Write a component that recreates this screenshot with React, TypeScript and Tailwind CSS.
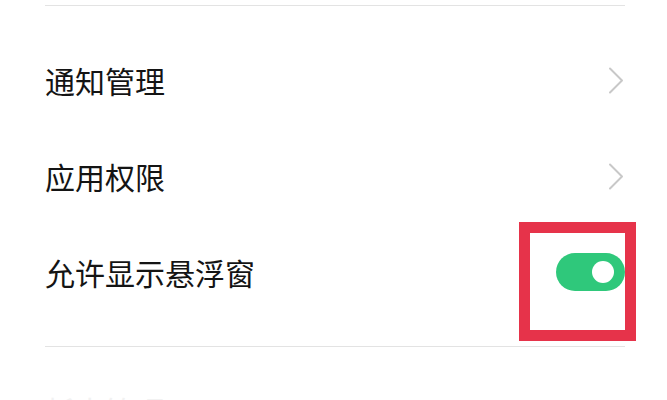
import React from "react";

const Chevron = () => (
  <svg width="16" height="27" viewBox="0 0 16 27" fill="none">
    <path d="M2 1.5 L14 13.5 L2 25.5" stroke="#c8c8c8" strokeWidth="2" strokeLinecap="round" strokeLinejoin="round" />
  </svg>
);

const Row = ({ label, right }: { label: string; right: React.ReactNode }) => (
  <div className="flex h-[96px] items-center justify-between">
    <span className="text-[30px] leading-none text-[#141414]" style={{ fontFamily: '"Noto Sans CJK SC", "Noto Sans", sans-serif' }}>
      {label}
    </span>
    <div className="flex items-center">{right}</div>
  </div>
);

export default function App() {
  return (
    <div className="relative h-[400px] w-[667px] overflow-hidden bg-white">
      <div className="ml-[45px] mr-[42px] pt-[5px]">
        <div className="h-px bg-[#e3e3e3]" />
        <div className="h-[26px]" />
        <Row label="通知管理" right={<div className="mr-[1px]"><Chevron /></div>} />
        <Row label="应用权限" right={<div className="mr-[1px]"><Chevron /></div>} />
        <Row
          label="允许显示悬浮窗"
          right={
            <div className="flex h-[38px] w-[69px] items-center justify-end rounded-full bg-[#2fc87b] pr-[11px]">
              <div className="h-[22px] w-[22px] rounded-full bg-white" />
            </div>
          }
        />
        <div className="h-[26px]" />
        <div className="h-px bg-[#e3e3e3]" />
        <div className="pt-[48px]">
          <span className="text-[30px] leading-none text-[#f2f2f2]" style={{ fontFamily: '"Noto Sans CJK SC", "Noto Sans", sans-serif' }}>
            耗电管理
          </span>
        </div>
      </div>
      <div className="absolute left-[519px] top-[222px] h-[119px] w-[117px] border-[11px] border-[#e6334a]" />
    </div>
  );
}
